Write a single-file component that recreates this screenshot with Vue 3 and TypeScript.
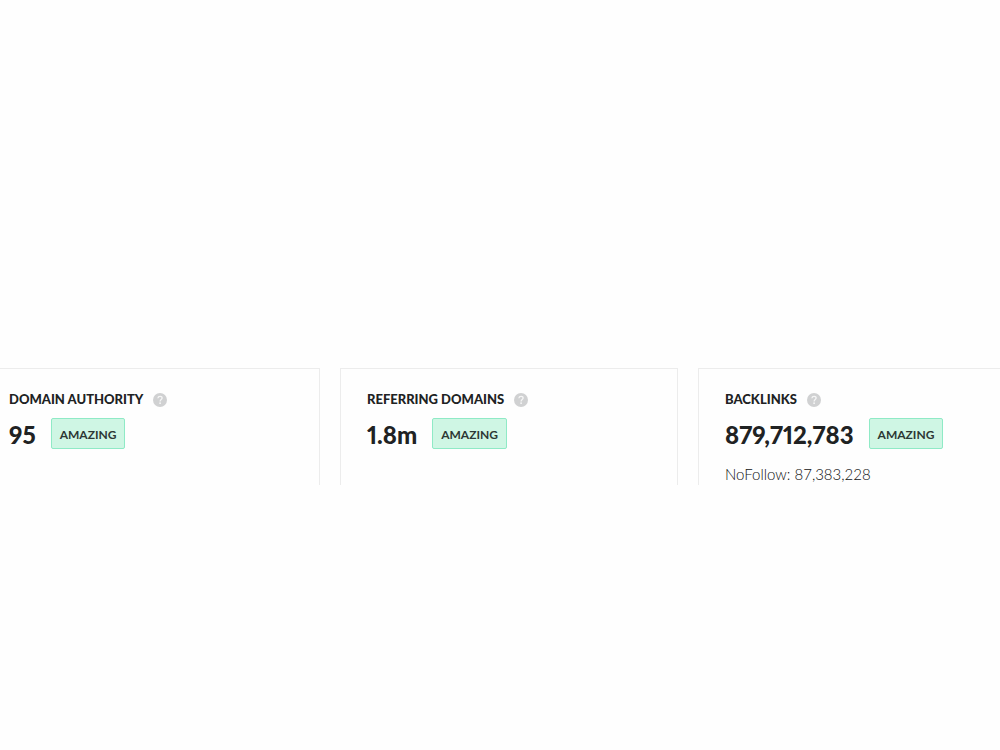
<script setup lang="ts">
interface Metric {
  label: string
  value: string
  rating: string
  note?: string
}

const metrics: Metric[] = [
  { label: 'DOMAIN AUTHORITY', value: '95', rating: 'AMAZING' },
  { label: 'REFERRING DOMAINS', value: '1.8m', rating: 'AMAZING' },
  { label: 'BACKLINKS', value: '879,712,783', rating: 'AMAZING', note: 'NoFollow: 87,383,228' },
]
</script>

<template>
  <main class="page">
    <div class="metrics">
      <section v-for="metric in metrics" :key="metric.label" class="card">
        <header class="head">
          <h2 class="label">{{ metric.label }}</h2>
          <button class="help" type="button" :aria-label="'About ' + metric.label">
            <svg viewBox="0 0 14 14" width="14" height="14" aria-hidden="true">
              <circle cx="7" cy="7" r="7" fill="#d0d1d2" />
              <path
                d="M4.9 5.2C5 4 5.9 3.3 7.1 3.3C8.3 3.3 9.1 4 9.1 5C9.1 6.5 7.1 6.5 7.1 8.4"
                fill="none"
                stroke="#f6f6f6"
                stroke-width="1.3"
              />
              <rect x="6.3" y="9.4" width="1.6" height="1.6" fill="#f6f6f6" />
            </svg>
          </button>
        </header>
        <div class="figures">
          <strong class="value">{{ metric.value }}</strong>
          <span class="rating">{{ metric.rating }}</span>
        </div>
        <p v-if="metric.note" class="note">{{ metric.note }}</p>
      </section>
    </div>
  </main>
</template>

<style>
body {
  background: #fefefe;
}
</style>

<style scoped>
.page {
  box-sizing: border-box;
  min-height: 100vh;
  padding-top: 368px;
  overflow: hidden;
  color: #202223;
  font-family: Lato, 'Open Sans', sans-serif;
}

.metrics {
  display: grid;
  grid-template-columns: repeat(3, 1fr);
  gap: 20px;
  margin: 0 -36px 0 -18px;
}

.card {
  padding: 20px 26px 0;
  border: 1px solid #ececec;
  border-bottom: 0;
  background: #fefefe;
}

.head {
  display: flex;
  align-items: center;
  gap: 10px;
  height: 20px;
}

.label {
  margin: 0;
  font-size: 13px;
  font-weight: 900;
  line-height: 20px;
  white-space: nowrap;
}

.help {
  display: block;
  padding: 2px 0 0;
  border: 0;
  background: none;
}

.help svg {
  display: block;
}

.figures {
  display: flex;
  align-items: flex-start;
  gap: 15px;
  margin-top: 9px;
}

.value {
  font-size: 24px;
  font-weight: 900;
  font-variant-numeric: proportional-nums;
  line-height: 34px;
}

.rating {
  padding: 6px 8px 4px;
  border: 1px solid #8feac6;
  border-radius: 2px;
  background: #cff6e4;
  color: #2d3835;
  font-size: 12px;
  font-weight: 700;
  line-height: 19px;
}

.note {
  margin: 11px 0 0;
  color: #101112;
  font-size: 15px;
  font-weight: 300;
  line-height: 22px;
}
</style>
